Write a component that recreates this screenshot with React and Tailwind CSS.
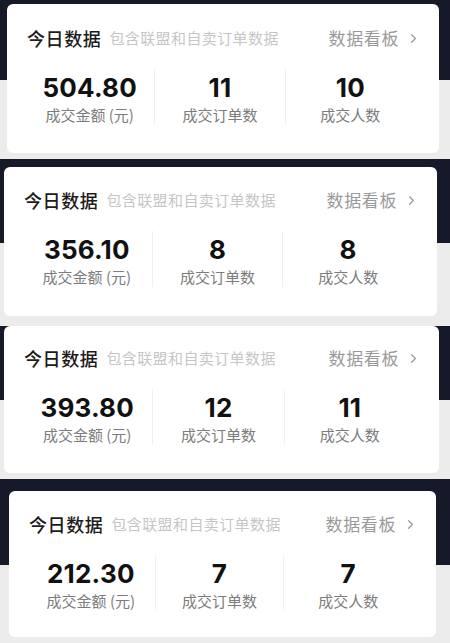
import { ChevronRight } from 'lucide-react'

const PANELS = [
  {
    amount: '504.80', orders: '11', buyers: '10',
    panel: 'pt-[4px] pb-[6px] pl-[7px] pr-[11px] bg-[linear-gradient(to_bottom,#151929_80px,#ececec_80px)]',
    card: 'h-[149px] pt-[22px]',
  },
  {
    amount: '356.10', orders: '8', buyers: '8',
    panel: 'pt-[8px] pb-[10px] pl-[4px] pr-[13px] bg-[linear-gradient(to_bottom,#151929_84px,#ececec_84px)]',
    card: 'h-[149px] pt-[21px]',
  },
  {
    amount: '393.80', orders: '12', buyers: '11',
    panel: 'pt-0 pb-[6px] pl-[4px] pr-[11px] bg-[linear-gradient(to_bottom,#151929_74px,#ececec_74px)]',
    card: 'h-[147px] pt-[20px]',
  },
  {
    amount: '212.30', orders: '7', buyers: '7',
    panel: 'pt-[12px] pb-[6px] pl-[9px] pr-[14px] bg-[linear-gradient(to_bottom,#151929_86px,#ececec_86px)]',
    card: 'h-[146px] pt-[21px]',
  },
]

function Stat({ value, label, first }) {
  return (
    <div
      className={
        first
          ? 'flex-1 flex flex-col items-center pt-[4px] h-[56px]'
          : 'flex-1 flex flex-col items-center pt-[4px] h-[56px] border-l border-[#f0f0f0]'
      }
    >
      <div className="text-[26px] leading-[30px] font-bold text-[#111] font-['Inter',sans-serif] tracking-[0.2px]">
        {value}
      </div>
      <div className="mt-[2px] text-[15px] leading-[20px] text-[#7c7c7c]">{label}</div>
    </div>
  )
}

function DataCard({ item }) {
  return (
    <div className={`bg-white rounded-[6px] ${item.card}`}>
      {/* header */}
      <div className="flex items-center pl-[20px] pr-[18px] h-[24px]">
        <span className="text-[18px] font-medium text-[#1c1c1c] tracking-[0.6px]">今日数据</span>
        <span className="ml-[8px] text-[15px] text-[#c6c6c6] tracking-[0.4px]">包含联盟和自卖订单数据</span>
        <span className="ml-auto flex items-center text-[17px] text-[#9a9a9a] tracking-[0.6px]">
          数据看板
          <ChevronRight size={15} strokeWidth={2} className="ml-[7px] text-[#9a9a9a]" />
        </span>
      </div>

      {/* stats */}
      <div className="flex mt-[19px] pl-[18px] pr-[24px]">
        <Stat value={item.amount} label="成交金额 (元)" first />
        <Stat value={item.orders} label="成交订单数" />
        <Stat value={item.buyers} label="成交人数" />
      </div>
    </div>
  )
}

export default function App() {
  return (
    <div className="w-[450px] h-[643px] overflow-hidden bg-[#ececec] font-['Noto_Sans_CJK_SC','Noto_Sans',sans-serif]">
      {PANELS.map((item, i) => (
        <div key={i} className={item.panel}>
          <DataCard item={item} />
        </div>
      ))}
    </div>
  )
}
